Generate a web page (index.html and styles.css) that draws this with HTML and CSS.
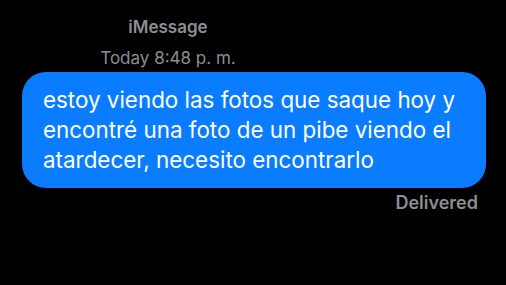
FILE: index.html
```html
<!DOCTYPE html>
<html lang="en">
<head>
    <meta charset="UTF-8">
    <title>iMessage</title>
    <link rel="stylesheet" href="styles.css">
</head>
<body>
    <div class="thread">
        <div class="meta">
            <div class="service">iMessage</div>
            <div class="time">Today 8:48 p. m.</div>
        </div>
        <div class="bubble">estoy viendo las fotos que saque hoy y encontré una foto de un pibe viendo el atardecer, necesito encontrarlo</div>
        <div class="status">Delivered</div>
    </div>
</body>
</html>
```
FILE: styles.css
```css
* { margin: 0; padding: 0; box-sizing: border-box; }
body {
    background: #000;
    font-family: Inter, "Noto Sans", sans-serif;
    color: #fff;
}
.thread { padding-top: 16px; }
.meta {
    width: 336px;
    text-align: center;
    color: #8e8e93;
}
.service { font-size: 17px; font-weight: 600; line-height: 23px; }
.time { font-size: 17px; line-height: 23px; margin-top: 8px; }
.bubble {
    margin: 2px 20px 0 22px;
    background: #0a7cff;
    border-radius: 24px;
    padding: 13px 18px 13px 21px;
    font-size: 22.4px;
    line-height: 30px;
}
.status {
    text-align: right;
    margin: 4px 28px 0 0;
    color: #8e8e93;
    font-size: 18px;
    font-weight: 600;
}
```
